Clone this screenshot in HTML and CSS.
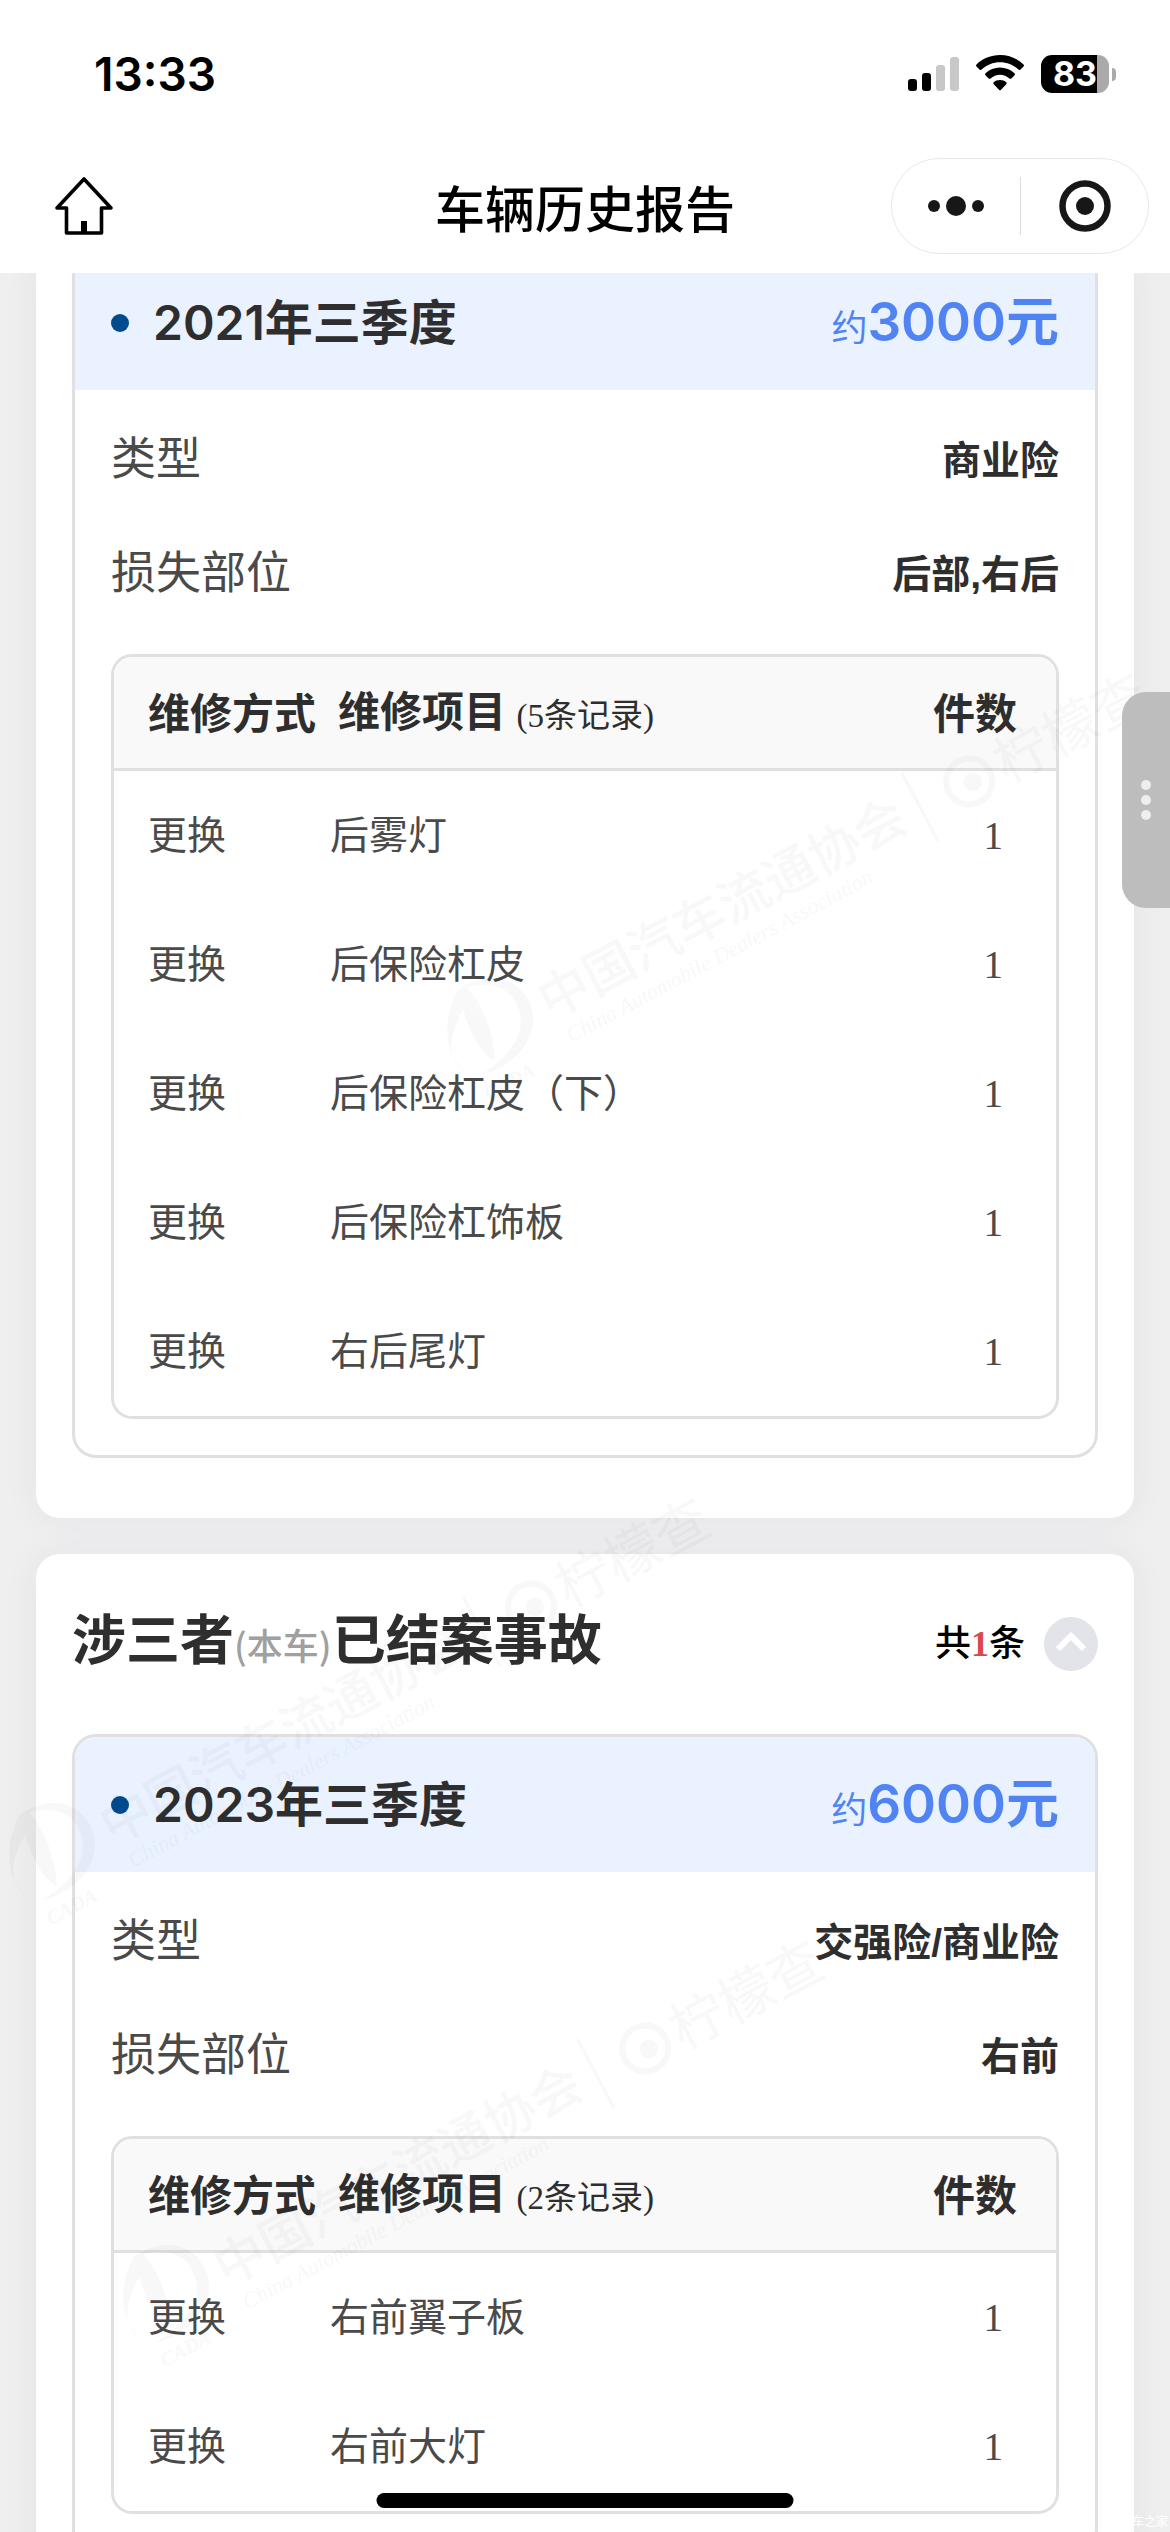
FILE: index.html
```html
<!DOCTYPE html>
<html lang="zh-CN">
<head>
  <meta charset="UTF-8">
  <title>车辆历史报告</title>
  <meta name="viewport" content="width=device-width, initial-scale=1.0">
  <link rel="stylesheet" href="styles.css">
</head>
<body>
<div class="screen">

  <!-- HEADER -->
  <header class="header">
    <div class="status-bar">
      <span class="time">13:33</span>
      <div class="status-icons">
        <svg width="51" height="38" viewBox="0 0 51 38">
          <rect x="0" y="24" width="9" height="12" rx="3"/>
          <rect x="14" y="18" width="9" height="18" rx="3"/>
          <rect x="28" y="10" width="9" height="26" rx="3" fill="#c8c8c8"/>
          <rect x="42" y="2" width="9" height="34" rx="3" fill="#c8c8c8"/>
        </svg>
        <svg width="48" height="38" viewBox="0 0 48 38">
          <path d="M24 0C33 0 41.500 3.500 47.500 9.500Q48.500 10.500 47.500 11.500L44.500 14.500Q43.500 15.500 42.500 14.500C37.500 9.800 31 7.200 24 7.200S10.500 9.800 5.500 14.500Q4.500 15.500 3.500 14.500L.5 11.500Q-.5 10.500 .5 9.500C6.500 3.500 15 0 24 0Z"/>
          <path d="M24 12.500C29.500 12.500 34.600 14.600 38.500 18.300Q39.500 19.300 38.500 20.300L35.400 23.400Q34.400 24.300 33.400 23.400C30.800 21.100 27.500 19.700 24 19.700S17.200 21.100 14.600 23.400Q13.600 24.300 12.600 23.400L9.500 20.300Q8.500 19.300 9.500 18.300C13.400 14.600 18.500 12.500 24 12.500Z"/>
          <path d="M24 25C26.500 25 28.700 25.900 30.300 27.300Q31.300 28.300 30.300 29.300L25 34.800Q24 35.800 23 34.800L17.700 29.300Q16.700 28.300 17.700 27.300C19.300 25.900 21.500 25 24 25Z"/>
        </svg>
        <div class="battery">
          <span class="battery-body">83</span>
          <span class="battery-cap"></span>
        </div>
      </div>
    </div>

    <nav class="navbar">
      <button class="icon-btn home-btn" aria-label="首页">
        <svg width="60" height="60" viewBox="0 0 60 60" fill="none" stroke="#000" stroke-width="3.600" stroke-linejoin="round">
          <path d="M30 3L57 32H47.500V57H12.500V32H3Z"/>
          <path d="M30 57V45" stroke-width="6"/>
        </svg>
      </button>
      <h1>车辆历史报告</h1>
      <div class="capsule">
        <button class="icon-btn" aria-label="更多">
          <svg width="58" height="54" viewBox="0 0 58 54" fill="#171717">
            <circle cx="7" cy="27" r="6"/>
            <circle cx="29" cy="27" r="10"/>
            <circle cx="51" cy="27" r="6"/>
          </svg>
        </button>
        <button class="icon-btn" aria-label="关闭">
          <svg width="54" height="54" viewBox="0 0 54 54">
            <circle cx="27" cy="27" r="22.500" fill="none" stroke="#171717" stroke-width="6.500"/>
            <circle cx="27" cy="27" r="9" fill="#171717"/>
          </svg>
        </button>
      </div>
    </nav>
  </header>

  <!-- REPORT -->
  <main class="report">
    <section class="card card-first">
      <article class="record">
        <div class="record-head">
          <h3>2021年三季度</h3>
          <p class="amount"><small>约</small>3000元</p>
        </div>
        <div class="record-body">
          <dl class="details">
            <div><dt>类型</dt><dd>商业险</dd></div>
            <div><dt>损失部位</dt><dd>后部,右后</dd></div>
          </dl>
          <div class="table-box">
            <table>
              <thead>
                <tr><th>维修方式</th><th>维修项目 <small>(5条记录)</small></th><th>件数</th></tr>
              </thead>
              <tbody>
                <tr><td>更换</td><td>后雾灯</td><td>1</td></tr>
                <tr><td>更换</td><td>后保险杠皮</td><td>1</td></tr>
                <tr><td>更换</td><td>后保险杠皮（下）</td><td>1</td></tr>
                <tr><td>更换</td><td>后保险杠饰板</td><td>1</td></tr>
                <tr><td>更换</td><td>右后尾灯</td><td>1</td></tr>
              </tbody>
            </table>
          </div>
        </div>
      </article>
    </section>

    <section class="card">
      <div class="section-head">
        <h2>涉三者<small>(本车)</small>已结案事故</h2>
        <div class="section-side">
          <span class="count">共<b>1</b>条</span>
          <button class="icon-btn fold-btn" aria-label="收起">
            <svg width="54" height="54" viewBox="0 0 54 54" fill="none" stroke="#fff" stroke-width="6">
              <path d="M14 32L27 19L40 32"/>
            </svg>
          </button>
        </div>
      </div>
      <article class="record">
        <div class="record-head">
          <h3>2023年三季度</h3>
          <p class="amount"><small>约</small>6000元</p>
        </div>
        <div class="record-body">
          <dl class="details">
            <div><dt>类型</dt><dd>交强险/商业险</dd></div>
            <div><dt>损失部位</dt><dd>右前</dd></div>
          </dl>
          <div class="table-box">
            <table>
              <thead>
                <tr><th>维修方式</th><th>维修项目 <small>(2条记录)</small></th><th>件数</th></tr>
              </thead>
              <tbody>
                <tr><td>更换</td><td>右前翼子板</td><td>1</td></tr>
                <tr><td>更换</td><td>右前大灯</td><td>1</td></tr>
              </tbody>
            </table>
          </div>
        </div>
      </article>
    </section>
  </main>

  <!-- WATERMARKS -->
  <svg class="watermark watermark-1" width="780" height="130" viewBox="0 0 780 130" aria-hidden="true">
    <defs>
      <g id="mark">
        <path d="M40 6C10 28 -2 58 10 84C-4 58 14 40 36 26C32 50 30 70 40 86C52 60 56 30 50 8C78 14 92 34 84 58C78 76 56 90 20 92C66 102 98 78 98 48C98 20 74 2 40 6Z"/>
        <text x="16" y="118" font-size="20" font-style="italic" font-weight="bold">CADA</text>
        <text x="108" y="76" font-size="51" font-weight="500">中国汽车流通协会</text>
        <text x="116" y="106" font-size="22" font-style="italic">China Automobile Dealers Association</text>
        <path d="M533 22H536V100H533Z"/>
        <circle cx="590" cy="62" r="23" fill="none" stroke="#000" stroke-width="6"/>
        <circle cx="593" cy="64" r="9"/>
        <text x="622" y="82" font-size="55">柠檬查</text>
      </g>
    </defs>
    <use href="#mark"/>
  </svg>
  <svg class="watermark watermark-2" width="780" height="130" viewBox="0 0 780 130" aria-hidden="true"><use href="#mark"/></svg>
  <svg class="watermark watermark-3" width="780" height="130" viewBox="0 0 780 130" aria-hidden="true"><use href="#mark"/></svg>

  <!-- FLOATING PARTS -->
  <button class="side-handle" aria-label="展开菜单">
    <span></span>
    <span></span>
    <span></span>
  </button>
  <div class="source">车之家</div>
  <div class="home-indicator"></div>

</div>
</body>
</html>
```

FILE: styles.css
```css
* {
  box-sizing: border-box;
}

body {
  margin: 0;
  background: #efefef;
  color: #2e2e2e;
  font-family: "Liberation Serif", "Noto Sans CJK SC", serif;
}

h1, h2, h3, p, dl, dd {
  margin: 0;
}

button {
  border: none;
  padding: 0;
  background: none;
  cursor: pointer;
}

svg {
  display: block;
}

.screen {
  position: relative;
  height: 100vh;
  overflow: hidden;
}

/* --- HEADER --- */
.header {
  position: relative;
  z-index: 2;
  background: #fff;
  color: #000;
}

.status-bar {
  display: flex;
  justify-content: space-between;
  align-items: center;
  height: 148px;
  padding: 0 54px 0 94px;
}

.time {
  font-family: Inter, sans-serif;
  font-size: 46px;
  font-weight: 600;
}

.status-icons {
  display: flex;
  align-items: center;
  gap: 17px;
}

.battery {
  display: flex;
  align-items: center;
  gap: 3px;
}

.battery-body {
  width: 68px;
  height: 38px;
  border-radius: 11px;
  background: linear-gradient(to right, #000 82%, #aaa 82%);
  color: #fff;
  font: 700 34px/38px Inter, sans-serif;
  text-align: center;
}

.battery-cap {
  width: 4px;
  height: 13px;
  border-radius: 0 6px 6px 0;
  background: #aaa;
}

.navbar {
  display: grid;
  grid-template-columns: 1fr auto 1fr;
  align-items: center;
  height: 125px;
  padding: 0 21px 9px 54px;
}

.navbar h1 {
  margin-right: 33px;
  font-family: "Noto Sans CJK SC", sans-serif;
  font-size: 50px;
  font-weight: 500;
  line-height: 72px;
}

.icon-btn {
  display: flex;
  justify-content: center;
  align-items: center;
}

.home-btn {
  justify-self: start;
}

.capsule {
  display: grid;
  grid-template-columns: 1fr 1fr;
  justify-self: end;
  width: 258px;
  height: 96px;
  border: 1px solid #e8e8e8;
  border-radius: 48px;
}

.capsule .icon-btn + .icon-btn {
  border-left: 1px solid #ddd;
  margin: 18px 0;
}

/* --- CARDS --- */
.card {
  margin: 0 36px 36px;
  padding: 0 36px 60px;
  border-radius: 24px;
  background: #fff;
  box-shadow: 0 0 36px rgba(50, 50, 140, 0.06);
}

/* the list is scrolled a little under the header */
.card-first {
  margin-top: -21px;
}

.section-head {
  display: flex;
  justify-content: space-between;
  align-items: center;
  height: 180px;
}

.section-head h2 {
  padding-bottom: 4px;
  font-family: "Liberation Sans", "Noto Sans CJK SC", sans-serif;
  font-size: 54px;
  font-weight: 600;
  line-height: 72px;
}

.section-head h2 small {
  color: #a0a0a0;
  font-family: "Noto Sans CJK SC", sans-serif;
  font-size: 36px;
  font-weight: 500;
}

.section-side {
  display: flex;
  align-items: center;
  gap: 19px;
  color: #000;
  font-size: 36px;
  font-weight: 500;
  line-height: 54px;
}

.count b {
  color: #d9484b;
}

.fold-btn {
  width: 54px;
  height: 54px;
  border-radius: 50%;
  background: #e3e3ea;
}

/* --- RECORD --- */
.record {
  border: 3px solid #e0e0e2;
  border-radius: 24px;
  overflow: hidden;
}

.record-head {
  display: flex;
  justify-content: space-between;
  align-items: center;
  height: 135px;
  padding: 0 36px;
  background: #eaf2ff;
  font-family: Inter, "Noto Sans CJK SC", sans-serif;
  line-height: 72px;
}

.record-head h3 {
  display: flex;
  align-items: center;
  gap: 24px;
  font-size: 48px;
  font-weight: 600;
}

.record-head h3::before {
  content: "";
  width: 18px;
  height: 18px;
  border-radius: 50%;
  background: #004b8d;
}

.amount {
  padding-top: 4px;
  color: #5084f3;
  font-size: 53px;
  font-weight: 600;
}

.amount small {
  font-size: 36px;
  font-weight: 400;
}

.record-body {
  padding: 42px 36px 36px;
}

.details {
  display: grid;
  gap: 57px;
  margin-bottom: 51px;
  line-height: 57px;
}

.details div {
  display: flex;
  justify-content: space-between;
}

.details dt {
  color: #4a4a4a;
  font-size: 45px;
}

.details dd {
  font-family: "Liberation Sans", "Noto Sans CJK SC", sans-serif;
  font-size: 39px;
  font-weight: 700;
}

/* --- REPAIR TABLE --- */
.table-box {
  border: 3px solid #e0e0e0;
  border-radius: 21px;
  overflow: hidden;
}

table {
  width: 100%;
  border-spacing: 0;
  table-layout: fixed;
}

th, td {
  padding: 0;
  font-weight: 400;
  line-height: 48px;
  text-align: left;
}

th {
  height: 114px;
  padding-top: 4px;
  border-bottom: 3px solid #e0e0e0;
  background: #f9f9f9;
  font-size: 42px;
  font-weight: 700;
  white-space: nowrap;
}

th small {
  font-size: 33px;
  font-weight: 400;
}

th:first-child, td:first-child {
  width: 216px;
  padding-left: 34px;
}

th:nth-child(2) {
  padding-left: 8px;
}

th:last-child, td:last-child {
  width: 160px;
  text-align: right;
}

th:last-child {
  padding-right: 39px;
}

td {
  height: 129px;
  color: #4a4a4a;
  font-size: 39px;
}

td:last-child {
  padding-right: 53px;
}

/* --- OVERLAYS --- */
.watermark {
  position: absolute;
  z-index: 1;
  opacity: 0.025;
  overflow: visible;
  transform: rotate(-28deg);
  pointer-events: none;
}

.watermark-1 {
  left: 404px;
  top: 813px;
}

.watermark-2 {
  left: -34px;
  top: 1638px;
}

.watermark-3 {
  left: 80px;
  top: 2080px;
}

.side-handle {
  position: absolute;
  right: 0;
  top: 692px;
  z-index: 2;
  display: flex;
  flex-direction: column;
  justify-content: center;
  align-items: center;
  gap: 5px;
  width: 48px;
  height: 216px;
  border-radius: 24px 0 0 24px;
  background: #bdbdbd;
}

.side-handle span {
  width: 10px;
  height: 10px;
  border-radius: 50%;
  background: #eee;
}

.source {
  position: absolute;
  right: 2px;
  bottom: 2px;
  color: #fff;
  font-size: 12px;
}

.home-indicator {
  position: absolute;
  left: 50%;
  bottom: 24px;
  z-index: 3;
  width: 417px;
  height: 15px;
  border-radius: 8px;
  background: #000;
  transform: translateX(-50%);
}
```
